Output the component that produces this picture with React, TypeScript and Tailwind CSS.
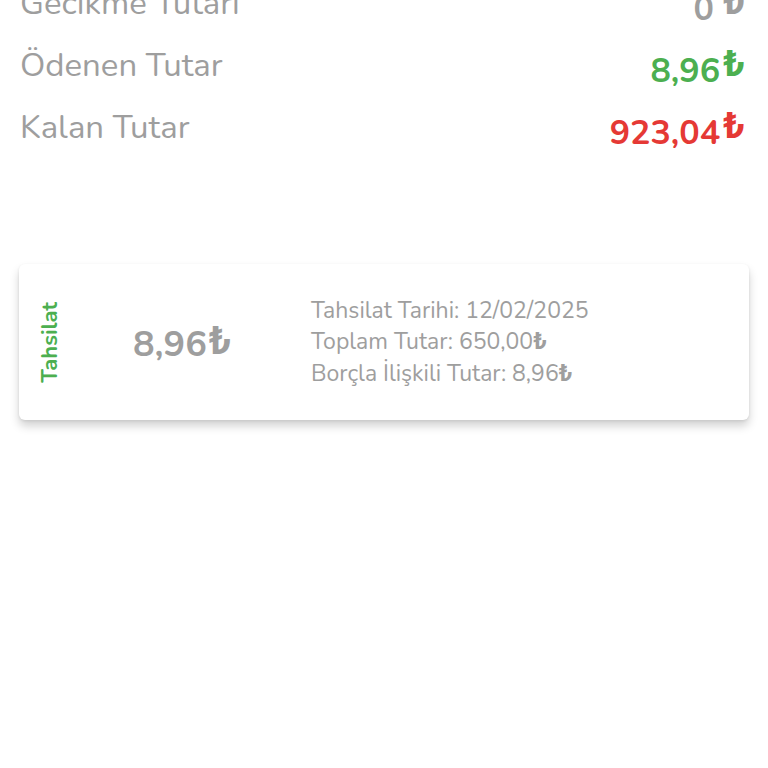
import React from "react";

const font = { fontFamily: "Nunito, 'Noto Sans', 'Open Sans', sans-serif" };
const lira = { fontFamily: "Roboto, 'Noto Sans', sans-serif" };

function Row({ label, value, color }: { label: string; value: string; color: string }) {
  return (
    <div className="flex h-[62px] items-center justify-between pl-[20px] pr-[23px]">
      <span className="text-[33px] text-[#9e9e9e]">{label}</span>
      <span className={`text-[34px] font-bold ${color}`}>
        {value}
        <span className="ml-[3px] text-[37px] align-[6px]" style={lira}>
          ₺
        </span>
      </span>
    </div>
  );
}

export default function App() {
  return (
    <div className="min-h-[768px] w-[768px] overflow-hidden bg-white" style={font}>
      <div className="-mt-[27px]">
        <div className="flex h-[62px] items-center justify-between pl-[20px] pr-[23px]">
          <span className="text-[33px] text-[#9e9e9e]">Gecikme Tutarı</span>
          <span className="text-[34px] font-bold text-[#9e9e9e]">
            0 <span className="text-[37px] align-[6px]" style={lira}>₺</span>
          </span>
        </div>
        <Row label="Ödenen Tutar" value="8,96" color="text-[#4caf50]" />
        <Row label="Kalan Tutar" value="923,04" color="text-[#e53935]" />
      </div>

      <div className="mx-[19px] mt-[105px] flex h-[156px] items-center rounded-[6px] bg-white shadow-[0_6px_10px_rgba(0,0,0,0.18),0_1px_3px_rgba(0,0,0,0.08)]">
        <div className="ml-[20px] flex w-[22px] justify-center">
          <div className="rotate-180 text-[22px] font-bold leading-[22px] text-[#4caf50] [writing-mode:vertical-rl]">
            Tahsilat
          </div>
        </div>
        <div className="ml-[72px] w-[178px] text-[36px] font-bold text-[#9e9e9e]">
          8,96<span className="ml-[2px] text-[38px] align-[2px]" style={lira}>₺</span>
        </div>
        <div className="flex flex-col text-[23px] leading-[31.5px] text-[#9e9e9e]">
          <span>Tahsilat Tarihi: 12/02/2025</span>
          <span>
            Toplam Tutar: 650,00<span className="font-bold" style={lira}>₺</span>
          </span>
          <span>
            Borçla İlişkili Tutar: 8,96<span className="font-bold" style={lira}>₺</span>
          </span>
        </div>
      </div>
    </div>
  );
}
